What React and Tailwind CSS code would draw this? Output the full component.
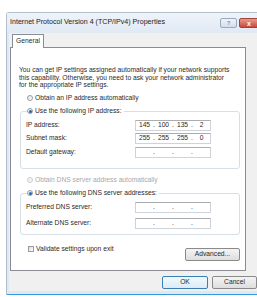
import React from 'react';

const font = { fontFamily: '"Liberation Sans", Arial, sans-serif' };

// 4-part IP field; empty parts still show their dots
const IpField = ({ parts = ['', '', '', ''] }) => (
  <div className="flex h-[11px] w-[76px] items-center border border-[#cfd2d8] border-t-[#abadb3] bg-white text-[6.7px] leading-none text-[#2a2a2a]">
    {parts.map((p, i) => (
      <React.Fragment key={i}>
        <span className="flex-1 text-center">{p}</span>
        {i < 3 && <span className="w-[2px] text-center">.</span>}
      </React.Fragment>
    ))}
  </div>
);

const Radio = ({ checked, disabled }) => (
  <span
    className={`flex h-[6px] w-[6px] shrink-0 items-center justify-center rounded-full border ${
      disabled ? 'border-[#cdcdcd] bg-[#f4f4f4]' : 'border-[#9a9b9b] bg-gradient-to-br from-[#e6e6e6] to-white'
    }`}
  >
    {checked && <span className="h-[3px] w-[3px] rounded-full bg-[#2466b4]" />}
  </span>
);

const RadioRow = ({ checked, disabled, label }) => (
  <div className="flex h-[9px] items-center gap-[2px]">
    <Radio checked={checked} disabled={disabled} />
    <span className={`whitespace-nowrap text-[6.7px] leading-none ${disabled ? 'text-[#a8a8a8]' : 'text-[#2a2a2a]'}`}>
      {label}
    </span>
  </div>
);

const Btn = ({ children, primary, className = '' }) => (
  <div
    className={`flex h-[13px] items-center justify-center rounded-[2px] border text-[6.7px] leading-none text-[#2a2a2a] ${
      primary
        ? 'border-[#3c7fb1] bg-gradient-to-b from-[#f0f8fd] to-[#dcecf7]'
        : 'border-[#8a8a8a] bg-gradient-to-b from-[#f4f4f4] to-[#dedede]'
    } ${className}`}
  >
    {children}
  </div>
);

const FieldRow = ({ label, parts }) => (
  <div className="flex items-center">
    <span className="w-[109px] whitespace-nowrap text-[6.7px] leading-none text-[#2a2a2a]">{label}</span>
    <IpField parts={parts} />
  </div>
);

export default function App() {
  return (
    <div className="h-[297px] w-[257px] overflow-hidden bg-white pl-[6px] pt-[12px]" style={font}>
      <div className="flex h-[283px] w-[256px] flex-col rounded-t-[3px] border-l border-t border-[#b3bfcd] bg-[#dfe8f3]">
        {/* title bar */}
        <div className="flex h-[20px] items-center bg-gradient-to-b from-[#eef3f9] to-[#e0e9f4] pl-[3px] pr-[3px]">
          <span className="flex-1 whitespace-nowrap text-[7.1px] leading-none text-[#222]">
            Internet Protocol Version 4 (TCP/IPv4) Properties
          </span>
          <div className="mr-[2px] flex h-[10px] w-[17px] items-center justify-center rounded-[2px] border border-[#9aa9bd] bg-gradient-to-b from-[#eef3f9] to-[#d3deeb] text-[6px] font-bold leading-none text-[#8391a5]">
            ?
          </div>
          <div className="flex h-[10px] w-[20px] items-center justify-center rounded-[2px] border border-[#9a463c] bg-gradient-to-b from-[#e8998d] to-[#c8493a] text-[7px] font-bold leading-none text-white">
            x
          </div>
        </div>

        {/* client area */}
        <div className="ml-[2px] mr-[2px] flex flex-1 flex-col bg-[#f0f0f0] pt-[1px]">
          <div className="relative z-10 -mb-px ml-[3px] flex h-[14px] w-[32px] items-center justify-center border border-b-0 border-[#898c95] bg-white text-[6.7px] leading-none text-[#2a2a2a]">
            General
          </div>
          <div className="ml-[1px] flex h-[224px] w-[236px] flex-col border border-[#898c95] bg-white">
            <p className="ml-[8px] mt-[18px] whitespace-nowrap text-[6.7px] leading-[7.5px] text-[#2a2a2a]">
              You can get IP settings assigned automatically if your network supports
              <br />
              this capability. Otherwise, you need to ask your network administrator
              <br />
              for the appropriate IP settings.
            </p>

            <div className="ml-[16px] mt-[5px]">
              <RadioRow label="Obtain an IP address automatically" />
            </div>

            <fieldset className="ml-[9px] mr-[5px] mt-[4px] rounded-[3px] border border-[#d5dfe5] px-[5px] pb-[10px]">
              <legend className="ml-[1px] bg-white pr-[2px]">
                <RadioRow checked label="Use the following IP address:" />
              </legend>
              <div className="mt-[4px] flex flex-col gap-[2.5px]">
                <FieldRow label="IP address:" parts={['145', '100', '135', '2']} />
                <FieldRow label="Subnet mask:" parts={['255', '255', '255', '0']} />
                <FieldRow label="Default gateway:" />
              </div>
            </fieldset>

            <div className="ml-[16px] mt-[7px]">
              <RadioRow disabled label="Obtain DNS server address automatically" />
            </div>

            <fieldset className="ml-[9px] mr-[5px] mt-[4px] rounded-[3px] border border-[#d5dfe5] px-[5px] pb-[5px]">
              <legend className="ml-[1px] bg-white pr-[2px]">
                <RadioRow checked label="Use the following DNS server addresses:" />
              </legend>
              <div className="mt-[4px] flex flex-col gap-[5px]">
                <FieldRow label="Preferred DNS server:" />
                <FieldRow label="Alternate DNS server:" />
              </div>
            </fieldset>

            <div className="ml-[17px] mr-[5px] mt-[11px] flex items-start justify-between">
              <div className="flex items-center gap-[2px]">
                <span className="h-[6px] w-[6px] border border-[#9a9b9b] bg-gradient-to-br from-[#dcdcdc] to-white" />
                <span className="whitespace-nowrap text-[6.7px] leading-none text-[#2a2a2a]">Validate settings upon exit</span>
              </div>
              <Btn className="mt-[2px] w-[55px]">Advanced...</Btn>
            </div>
          </div>

          <div className="mr-[3px] mt-[5px] flex justify-end gap-[4px]">
            <Btn primary className="w-[46px]">OK</Btn>
            <Btn className="w-[45px]">Cancel</Btn>
          </div>
        </div>

        <div className="h-[3px] bg-[#dfe8f3]" />
        <div className="h-[1px] bg-[#3a9ad9]" />
      </div>
    </div>
  );
}
